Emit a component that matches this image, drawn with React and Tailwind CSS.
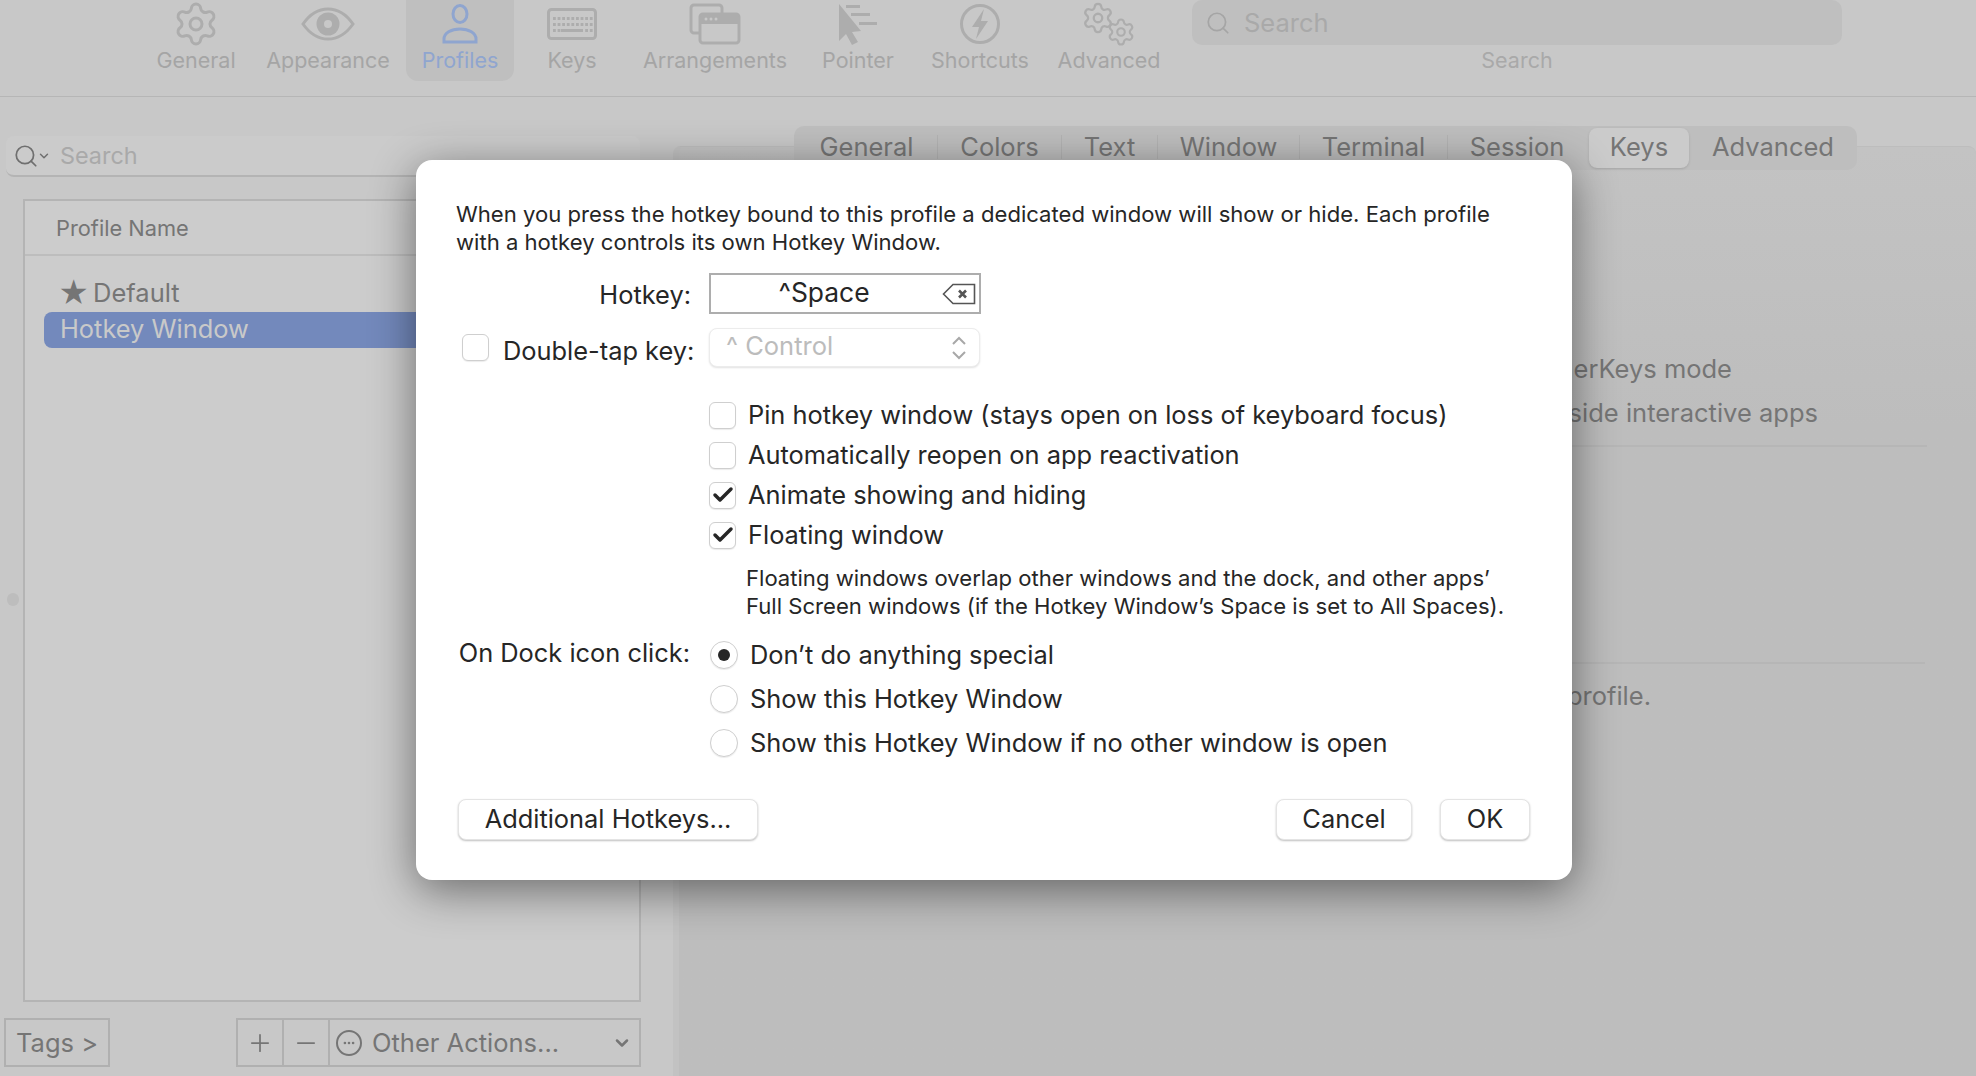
import { Settings, Search, Plus, Minus, ChevronDown, Ellipsis, Check } from 'lucide-react';

const FONT = "font-['Inter',sans-serif]";

function EyeIcon() {
  return (
    <svg width="54" height="34" viewBox="0 0 54 34" fill="none">
      <path d="M2 17C9 7 18 2 27 2s18 5 25 15c-7 10-16 15-25 15S9 27 2 17z" stroke="#adadad" strokeWidth="3" />
      <circle cx="27" cy="17" r="11.5" fill="#adadad" />
      <circle cx="27" cy="17" r="4" fill="#c8c8c8" />
    </svg>
  );
}

function UserIcon() {
  return (
    <svg width="36" height="40" viewBox="0 0 36 40" fill="none" stroke="#8fa5cf" strokeWidth="3">
      <ellipse cx="18" cy="10" rx="7" ry="8.5" />
      <path d="M2 38v-3c0-6 7-10 16-10s16 4 16 10v3z" />
    </svg>
  );
}

function KeyboardIcon() {
  const keys = [];
  for (let r = 0; r < 3; r++) {
    for (let c = 0; c < 9; c++) {
      if (r === 2 && c > 1 && c < 7) continue;
      keys.push(<rect key={`${r}-${c}`} x={6 + c * 4.6} y={9 + r * 6} width="2.8" height="3" fill="#adadad" />);
    }
  }
  return (
    <svg width="50" height="32" viewBox="0 0 50 32" fill="none">
      <rect x="1.5" y="1.5" width="47" height="29" rx="3" stroke="#adadad" strokeWidth="3" />
      {keys}
      <rect x="14" y="21" width="22" height="3" fill="#adadad" />
    </svg>
  );
}

function ArrangementsIcon() {
  return (
    <svg width="52" height="42" viewBox="0 0 52 42" fill="none">
      <path d="M10 30H5a3 3 0 0 1-3-3V5a3 3 0 0 1 3-3h25a3 3 0 0 1 3 3v5" stroke="#adadad" strokeWidth="3" />
      <rect x="11" y="11" width="39" height="29" rx="3" fill="#c8c8c8" stroke="#adadad" strokeWidth="3" />
      <path d="M11 14a3 3 0 0 1 3-3h33a3 3 0 0 1 3 3v7H11z" fill="#adadad" />
      <circle cx="17" cy="16" r="1.5" fill="#c8c8c8" />
      <circle cx="22" cy="16" r="1.5" fill="#c8c8c8" />
      <circle cx="27" cy="16" r="1.5" fill="#c8c8c8" />
    </svg>
  );
}

function PointerIcon() {
  return (
    <svg width="40" height="42" viewBox="0 0 40 42" fill="#adadad">
      <path d="M1 1l22 27-9 1 6 10-6 3-6-11-7 7z" />
      <rect x="8" y="2" width="14" height="3" />
      <rect x="13" y="10" width="19" height="3" />
      <rect x="21" y="19" width="18" height="3" />
    </svg>
  );
}

function BoltIcon() {
  return (
    <svg width="42" height="42" viewBox="0 0 42 42" fill="none">
      <circle cx="21" cy="21" r="18.5" stroke="#adadad" strokeWidth="3" />
      <path d="M25 6L13 24h7l-3 12 12-18h-7z" fill="#adadad" />
    </svg>
  );
}

function ToolbarItem({ width, label, active, children }) {
  return (
    <div className={`${width} h-[81px] flex flex-col items-center rounded-b-xl ${active ? 'bg-[#bfbfbf]' : ''}`}>
      <div className="h-[47px] flex items-center justify-center">{children}</div>
      <span className={`text-[21.5px] leading-[26px] ${active ? 'text-[#8fa5cf]' : 'text-[#a5a5a5]'}`}>{label}</span>
    </div>
  );
}

function Toolbar() {
  return (
    <div className="h-[97px] flex pl-[130px] border-b border-[#b6b6b6]">
      <ToolbarItem width="w-[132px]" label="General">
        <Settings size={48} strokeWidth={1.5} color="#adadad" />
      </ToolbarItem>
      <ToolbarItem width="w-[132px]" label="Appearance">
        <EyeIcon />
      </ToolbarItem>
      <div className="w-3" />
      <ToolbarItem width="w-[108px]" label="Profiles" active>
        <UserIcon />
      </ToolbarItem>
      <ToolbarItem width="w-[116px]" label="Keys">
        <KeyboardIcon />
      </ToolbarItem>
      <ToolbarItem width="w-[170px]" label="Arrangements">
        <ArrangementsIcon />
      </ToolbarItem>
      <ToolbarItem width="w-[116px]" label="Pointer">
        <PointerIcon />
      </ToolbarItem>
      <ToolbarItem width="w-[128px]" label="Shortcuts">
        <BoltIcon />
      </ToolbarItem>
      <ToolbarItem width="w-[130px]" label="Advanced">
        <div className="w-[56px] h-[44px] flex">
          <Settings size={34} strokeWidth={1.6} color="#adadad" className="-mt-[1px] shrink-0" />
          <Settings size={30} strokeWidth={1.7} color="#adadad" className="-ml-[9px] mt-[15px] shrink-0" />
        </div>
      </ToolbarItem>
      <div className="ml-[18px] w-[650px] flex flex-col items-center">
        <div className="w-full h-[45px] rounded-[10px] bg-[#bfbfbf] flex items-center pl-[13px] gap-[13px]">
          <Search size={26} strokeWidth={1.6} color="#a5a5a5" />
          <span className="pt-[2px] text-[25.5px] text-[#a9a9a9]">Search</span>
        </div>
        <span className="mt-[2px] text-[21.5px] leading-[26px] text-[#a9a9a9]">Search</span>
      </div>
    </div>
  );
}

function ProfilesPanel() {
  return (
    <div className="w-[673px] flex flex-col">
      <div className="mt-[39px] ml-[6px] w-[634px] h-[41px] rounded-lg bg-[#cbcbcb] border-b-2 border-[#b4b4b4] flex items-center pl-[7px]">
        <Search size={26} strokeWidth={1.6} color="#6f6f6f" />
        <ChevronDown size={14} strokeWidth={2.5} color="#6f6f6f" className="-ml-[2px]" />
        <span className="ml-[9px] text-[23.4px] text-[#a9a9a9]">Search</span>
      </div>
      <div className="mt-[22px] ml-[23px] w-[618px] h-[803px] border-2 border-[#b4b4b4] bg-[#cccccc] flex flex-col">
        <div className="h-[55px] shrink-0 border-b-2 border-[#bdbdbd] flex items-center pl-[31px] pt-[2px] text-[21.8px] text-[#757575]">
          Profile Name
        </div>
        <div className="mt-[20px] ml-[33px] h-[36px] flex items-center pb-[2px] text-[25.5px] text-[#757575]">
          <span className="text-[30px] leading-none w-[35px]">★</span>
          <span>Default</span>
        </div>
        <div className="ml-[19px] mr-[8px] h-[36px] rounded-lg bg-[#7389bc] flex items-center pl-[16px] pb-[2px] text-[25.4px] text-[#c9c9c9]">
          Hotkey Window
        </div>
      </div>
      <div className="mt-[16px] ml-[4px] w-[637px] flex justify-between text-[25.5px] text-[#757575]">
        <div className="w-[106px] h-[49px] border-2 border-[#b0b0b0] flex items-center justify-center pt-[2px]">Tags &gt;</div>
        <div className="w-[405px] h-[49px] border-2 border-[#b0b0b0] flex items-center">
          <div className="w-[46px] h-full flex items-center justify-center border-r-2 border-[#b0b0b0]">
            <Plus size={28} strokeWidth={1.5} />
          </div>
          <div className="w-[46px] h-full flex items-center justify-center border-r-2 border-[#b0b0b0]">
            <Minus size={28} strokeWidth={1.5} />
          </div>
          <div className="ml-[6px] w-[26px] h-[26px] rounded-full border-2 border-[#757575] flex items-center justify-center">
            <Ellipsis size={14} strokeWidth={2.5} />
          </div>
          <span className="ml-[10px] pt-[2px] flex-1">Other Actions...</span>
          <ChevronDown size={20} strokeWidth={3} className="mr-[7px]" />
        </div>
      </div>
    </div>
  );
}

const TABS = [
  ['General', 'w-[144px] border-r border-[#b3b3b3] pl-[2px]'],
  ['Colors', 'w-[124px] border-r border-[#b3b3b3]'],
  ['Text', 'w-[96px] border-r border-[#b3b3b3]'],
  ['Window', 'w-[142px] border-r border-[#b3b3b3]'],
  ['Terminal', 'w-[148px] border-r border-[#b3b3b3]'],
  ['Session', 'w-[141px] pr-[3px]'],
];

function SettingsPanel() {
  return (
    <div className="flex-1 pt-[29px] flex flex-col min-w-0">
      <div className="relative z-10 ml-[121px] w-[1063px] h-[44px] rounded-[10px] bg-[#bebebe] flex items-center pb-[2px] text-[25.5px] text-[#757575]">
        {TABS.map(([name, cls]) => (
          <div key={name} className={`${cls} h-[24px] flex items-center justify-center`}>{name}</div>
        ))}
        <div className="w-[100px] h-[40px] mt-[2px] pb-[2px] rounded-lg bg-[#cbcbcb] shadow-sm flex items-center justify-center">Keys</div>
        <div className="flex-1 text-center">Advanced</div>
      </div>
      <div className="-mt-[24px] flex-1 rounded-t-lg bg-gradient-to-b from-[#c3c3c3] to-[#bdbdbd] to-[30%] border-t border-[#bdbdbd] border-l-[6px] border-l-[#c2c2c2] pt-[200px] text-[25.5px] leading-[44px] text-[#757575] text-right">
        <div className="pr-[244px]">OtherKeys mode</div>
        <div className="pr-[158px]">inside interactive apps</div>
        <div className="mt-[10px] ml-[40px] mr-[49px] border-t-2 border-[#b6b6b6]" />
        <div className="mt-[215px] ml-[40px] mr-[51px] border-t-2 border-[#b6b6b6]" />
        <div className="mt-[10px] pr-[325px]">this profile.</div>
      </div>
    </div>
  );
}

function Box({ checked }) {
  return (
    <div className="w-[27px] h-[27px] shrink-0 rounded-[6px] border border-[#cfcfcf] bg-white shadow-[0_1px_1px_rgba(0,0,0,0.08)] flex items-center justify-center">
      {checked && <Check size={24} strokeWidth={3.5} color="#262626" />}
    </div>
  );
}

function Radio({ on }) {
  return (
    <div className="w-[28px] h-[28px] shrink-0 rounded-full border border-[#cfcfcf] bg-white shadow-[0_1px_1px_rgba(0,0,0,0.08)] flex items-center justify-center">
      {on && <div className="w-[12px] h-[12px] rounded-full bg-[#262626]" />}
    </div>
  );
}

function CheckRow({ checked, children }) {
  return (
    <div className="h-[40px] flex items-center gap-[12px]">
      <Box checked={checked} />
      <span>{children}</span>
    </div>
  );
}

function RadioRow({ on, children }) {
  return (
    <div className="h-[44px] flex items-center gap-[12px]">
      <Radio on={on} />
      <span>{children}</span>
    </div>
  );
}

function DialogButton({ className, children }) {
  return (
    <button className={`${className} h-[41px] pb-[2px] rounded-lg bg-white border border-[#e4e4e4] shadow-[0_1px_2px_rgba(0,0,0,0.25)] text-[25.4px] text-[#262626]`}>
      {children}
    </button>
  );
}

function HotkeyDialog() {
  return (
    <div className="absolute z-20 left-[416px] top-[160px] w-[1156px] h-[720px] rounded-[16px] bg-white shadow-[0_10px_45px_rgba(0,0,0,0.48)] pl-[40px] pr-[42px] pt-[40px] text-[25.4px] leading-[34px] text-[#262626] flex flex-col">
      <p className="text-[22.1px] leading-[28px] text-[#262626] whitespace-nowrap">
        When you press the hotkey bound to this profile a dedicated window will show or hide. Each profile
        <br />
        with a hotkey controls its own Hotkey Window.
      </p>
      <div className="mt-[17px] flex items-center">
        <span className="w-[235px] text-right mt-[2px]">Hotkey:</span>
        <div className="ml-[18px] w-[272px] h-[41px] border-2 border-[#adadad] flex items-center relative">
          <span className="w-[226px] pb-[2px] text-center text-[26.4px] leading-none">^Space</span>
          <svg width="34" height="22" viewBox="0 0 34 22" fill="none" className="absolute right-[3px]">
            <path d="M1.5 11L11 1.5h21.5v19H11z" stroke="#555555" strokeWidth="1.6" />
            <path d="M17 7.5l7 7m0-7l-7 7" stroke="#555555" strokeWidth="2.6" />
          </svg>
        </div>
      </div>
      <div className="mt-[14px] flex items-center">
        <div className="ml-[6px]">
          <Box />
        </div>
        <span className="ml-[14px] w-[192px] pt-[6px] leading-[33px] whitespace-nowrap">Double-tap key:</span>
        <div className="ml-[14px] w-[271px] h-[39px] rounded-lg bg-white border border-[#ececec] shadow-[0_1px_2px_rgba(0,0,0,0.12)] flex items-center pl-[16px] pb-[4px] text-[25.5px] text-[#bcbcbc]">
          <span className="flex-1">^ Control</span>
          <svg width="16" height="24" viewBox="0 0 16 24" fill="none" stroke="#a8a8a8" strokeWidth="2" className="mr-[12px] mt-[4px]">
            <path d="M2 8l6-6 6 6M2 16l6 6 6-6" />
          </svg>
        </div>
      </div>
      <div className="mt-[28px] ml-[253px]">
        <CheckRow>Pin hotkey window (stays open on loss of keyboard focus)</CheckRow>
        <CheckRow>Automatically reopen on app reactivation</CheckRow>
        <CheckRow checked>Animate showing and hiding</CheckRow>
        <CheckRow checked>Floating window</CheckRow>
        <p className="mt-[9px] ml-[37px] text-[22.1px] leading-[28px] whitespace-nowrap">
          Floating windows overlap other windows and the dock, and other apps’
          <br />
          Full Screen windows (if the Hotkey Window’s Space is set to All Spaces).
        </p>
      </div>
      <div className="mt-[13px] flex">
        <span className="w-[234px] text-right mt-[3px] whitespace-nowrap">On Dock icon click:</span>
        <div className="ml-[20px]">
          <RadioRow on>Don’t do anything special</RadioRow>
          <RadioRow>Show this Hotkey Window</RadioRow>
          <RadioRow>Show this Hotkey Window if no other window is open</RadioRow>
        </div>
      </div>
      <div className="mt-[34px] ml-[2px] flex">
        <DialogButton className="w-[300px]">Additional Hotkeys...</DialogButton>
        <div className="flex-1" />
        <DialogButton className="w-[136px]">Cancel</DialogButton>
        <DialogButton className="ml-[28px] w-[90px]">OK</DialogButton>
      </div>
    </div>
  );
}

export default function App() {
  return (
    <div className={`${FONT} relative w-[1976px] h-[1076px] overflow-hidden bg-[#c8c8c8] flex flex-col`}>
      <Toolbar />
      <div className="flex-1 flex min-h-0">
        <ProfilesPanel />
        <SettingsPanel />
      </div>
      <div className="absolute left-[7px] top-[593px] w-[12px] h-[13px] rounded-full bg-[#bdbdbd]" />
      <HotkeyDialog />
    </div>
  );
}
